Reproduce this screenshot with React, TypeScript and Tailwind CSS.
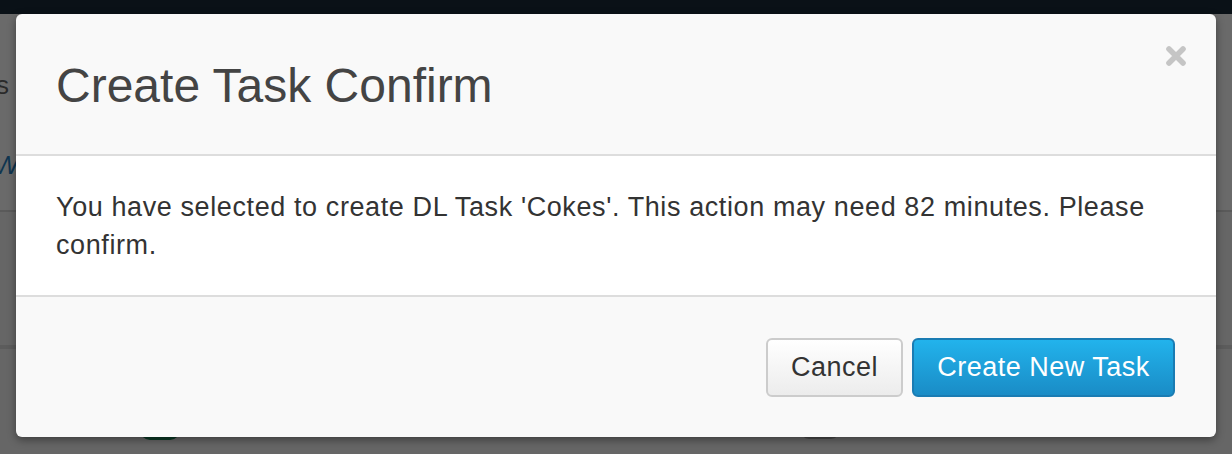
import React from "react";

export default function App() {
  return (
    <div
      className="relative w-[1232px] h-[454px] overflow-hidden bg-[#666666]"
      style={{ fontFamily: '"Liberation Sans", Arial, sans-serif' }}
    >
      {/* background page (dimmed) */}
      <div className="absolute inset-0 flex flex-col">
        <div className="h-[14px] bg-[#0a1117]" />
        <div className="h-[198px] bg-[#6a6a6a] border-b-2 border-[#5a5a5a] relative">
          <span className="absolute left-[-4px] top-[52px] text-[26px] text-[#2a2a2a]">s</span>
          <span className="absolute left-[-6px] top-[132px] text-[26px] italic text-[#0f3550]">W</span>
        </div>
        <div className="h-[137px] border-b-4 border-[#5c5c5c]" />
        <div className="flex-1" />
      </div>
      <div className="absolute left-[140px] top-[430px] w-[40px] h-[10px] rounded-b-full bg-[#0c3a26]" />
      <div className="absolute left-[800px] top-[430px] w-[40px] h-[9px] rounded-b-full bg-[#4a4a4a]" />

      {/* modal */}
      <div className="absolute left-[16px] top-[14px] w-[1200px] h-[423px] rounded-[6px] overflow-hidden bg-[#f9f9f9] flex flex-col shadow-[0_3px_9px_rgba(0,0,0,0.4)]">
        <div className="h-[142px] px-[40px] flex items-center justify-between border-b-2 border-[#dddddd] relative">
          <h3 className="text-[48px] leading-none text-[#444444] font-normal mt-[4px]">
            Create Task Confirm
          </h3>
          <button className="absolute right-[28px] top-[30px] w-[24px] h-[24px] flex items-center justify-center">
            <svg width="24" height="24" viewBox="0 0 24 24">
              <path
                d="M5 5 L19 19 M19 5 L5 19"
                stroke="#c5c5c5"
                strokeWidth="5.6"
                strokeLinecap="round"
              />
            </svg>
          </button>
        </div>
        <div className="bg-white h-[141px] px-[40px] pt-[32px] border-b-2 border-[#dddddd]">
          <p className="text-[27px] leading-[38px] tracking-[0.6px] text-[#333333]">
            You have selected to create DL Task 'Cokes'. This action may need 82 minutes. Please confirm.
          </p>
        </div>
        <div className="flex-1 flex items-start justify-end gap-[9px] px-[41px] pt-[41px]">
          <button className="h-[59px] w-[137px] rounded-[6px] border-2 border-[#cccccc] bg-gradient-to-b from-white to-[#ececec] text-[27px] tracking-[0.5px] text-[#333333]">
            Cancel
          </button>
          <button className="h-[59px] w-[263px] rounded-[6px] border-2 border-[#1a7cb3] bg-gradient-to-b from-[#22b3ec] to-[#1a8cc6] text-[27px] tracking-[0.5px] text-white">
            Create New Task
          </button>
        </div>
      </div>
    </div>
  );
}
